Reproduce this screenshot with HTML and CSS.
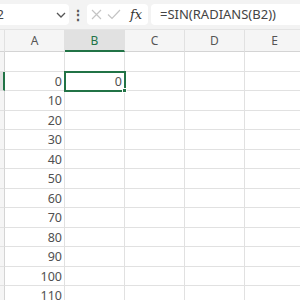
FILE: index.html
```html
<!DOCTYPE html>
<html lang="en">
<head>
  <meta charset="UTF-8" />
  <title>Sheet</title>
  <link rel="stylesheet" href="styles.css">
</head>
<body>
  <div class="toolbar">
    <div class="name-box">
      <span class="name-text">B2</span>
      <svg class="chevron" width="10" height="6" viewBox="0 0 10 6"><path d="M1 1l4 4 4-4" fill="none" stroke="#555" stroke-width="1.3"/></svg>
    </div>
    <div class="dots">⋮</div>
    <div class="fx-buttons">
      <svg class="icon-x" width="11" height="11" viewBox="0 0 11 11"><path d="M1 1l9 9M10 1L1 10" stroke="#c4c4c4" stroke-width="1.2"/></svg>
      <svg class="icon-check" width="14" height="11" viewBox="0 0 14 11"><path d="M1 5.5l4 4L13 1" fill="none" stroke="#c4c4c4" stroke-width="1.2"/></svg>
      <span class="fx">fx</span>
    </div>
    <div class="formula">=SIN(RADIANS(B2))</div>
  </div>

  <div class="grid">
    <div class="corner"></div>
    <div class="col-head">A</div>
    <div class="col-head active">B</div>
    <div class="col-head">C</div>
    <div class="col-head">D</div>
    <div class="col-head">E</div>

    <div class="row-head"></div><div class="cell"></div><div class="cell"></div><div class="cell"></div><div class="cell"></div><div class="cell"></div>
    <div class="row-head active"></div><div class="cell">0</div><div class="cell selected">0</div><div class="cell"></div><div class="cell"></div><div class="cell"></div>
    <div class="row-head"></div><div class="cell">10</div><div class="cell"></div><div class="cell"></div><div class="cell"></div><div class="cell"></div>
    <div class="row-head"></div><div class="cell">20</div><div class="cell"></div><div class="cell"></div><div class="cell"></div><div class="cell"></div>
    <div class="row-head"></div><div class="cell">30</div><div class="cell"></div><div class="cell"></div><div class="cell"></div><div class="cell"></div>
    <div class="row-head"></div><div class="cell">40</div><div class="cell"></div><div class="cell"></div><div class="cell"></div><div class="cell"></div>
    <div class="row-head"></div><div class="cell">50</div><div class="cell"></div><div class="cell"></div><div class="cell"></div><div class="cell"></div>
    <div class="row-head"></div><div class="cell">60</div><div class="cell"></div><div class="cell"></div><div class="cell"></div><div class="cell"></div>
    <div class="row-head"></div><div class="cell">70</div><div class="cell"></div><div class="cell"></div><div class="cell"></div><div class="cell"></div>
    <div class="row-head"></div><div class="cell">80</div><div class="cell"></div><div class="cell"></div><div class="cell"></div><div class="cell"></div>
    <div class="row-head"></div><div class="cell">90</div><div class="cell"></div><div class="cell"></div><div class="cell"></div><div class="cell"></div>
    <div class="row-head"></div><div class="cell">100</div><div class="cell"></div><div class="cell"></div><div class="cell"></div><div class="cell"></div>
    <div class="row-head"></div><div class="cell">110</div><div class="cell"></div><div class="cell"></div><div class="cell"></div><div class="cell"></div>
  </div>
</body>
</html>
```

FILE: styles.css
```css
:root {
  --bar-bg: #f3f3f3;
  --head-bg: #f5f5f5;
  --head-active: #e1e1e1;
  --grid-line: #e1e1e1;
  --green: #217346;
  --text: #505050;
}

html, body {
  margin: 0;
  width: 300px;
  height: 300px;
  overflow: hidden;
  background: #fff;
  font-family: "Noto Sans", "Open Sans", sans-serif;
  color: var(--text);
}

/* Formula bar */
.toolbar {
  height: 30px;
  box-sizing: border-box;
  background: var(--bar-bg);
  border-bottom: 1px solid #e4e4e4;
  display: flex;
  align-items: center;
  padding: 0 0 1px 0;
}
.name-box {
  width: 81px;
  height: 21px;
  margin-left: -12px;
  background: #fff;
  border-radius: 0 4px 4px 0;
  display: flex;
  align-items: center;
  justify-content: space-between;
  padding: 0 3px 0 0;
  box-sizing: border-box;
  font-size: 13px;
  color: #444;
}
.chevron { margin-top: 1px; }
.dots {
  width: 18px;
  text-align: center;
  font-size: 14px;
  font-weight: bold;
  color: #555;
}
.fx-buttons {
  width: 61px;
  height: 21px;
  background: #fff;
  border-radius: 4px;
  display: flex;
  align-items: center;
  padding-left: 4px;
  box-sizing: border-box;
}
.icon-check { margin-left: 5px; }
.fx {
  font-family: "DejaVu Serif", "Liberation Serif", serif;
  font-style: italic;
  font-size: 13px;
  color: #333;
  margin-left: 9px;
}
.formula {
  flex: 1;
  height: 21px;
  margin-left: 3px;
  background: #fff;
  border-radius: 4px 0 0 4px;
  padding-left: 9px;
  font-size: 13px;
  line-height: 21px;
  color: #444;
}

/* Grid */
.grid {
  display: grid;
  grid-template-columns: 5px repeat(5, 60px);
  grid-template-rows: 22px 19.5px repeat(12, 19.5px);
}
.corner, .col-head, .row-head {
  background: var(--head-bg);
  border-right: 1px solid var(--grid-line);
  border-bottom: 1px solid #d4d4d4;
  box-sizing: border-box;
}
.col-head {
  font-size: 12px;
  color: #555;
  text-align: center;
  line-height: 21px;
}
.col-head.active {
  background: var(--head-active);
  color: var(--green);
  border-bottom: 2px solid var(--green);
}
.row-head {
  border-bottom: 1px solid var(--grid-line);
  border-right: 1px solid #d4d4d4;
}
.row-head.active {
  background: var(--head-active);
  border-right: 2px solid var(--green);
}
.cell {
  border-right: 1px solid var(--grid-line);
  border-bottom: 1px solid var(--grid-line);
  box-sizing: border-box;
  font-size: 12.5px;
  text-align: right;
  padding-right: 2px;
  line-height: 19px;
  position: relative;
}
.cell.selected {
  outline: 2px solid var(--green);
  outline-offset: -1px;
  z-index: 1;
}
.cell.selected::after {
  content: '';
  position: absolute;
  right: -3px;
  bottom: -3px;
  width: 5px;
  height: 5px;
  background: var(--green);
  border: 1px solid #fff;
  box-sizing: border-box;
}
```
